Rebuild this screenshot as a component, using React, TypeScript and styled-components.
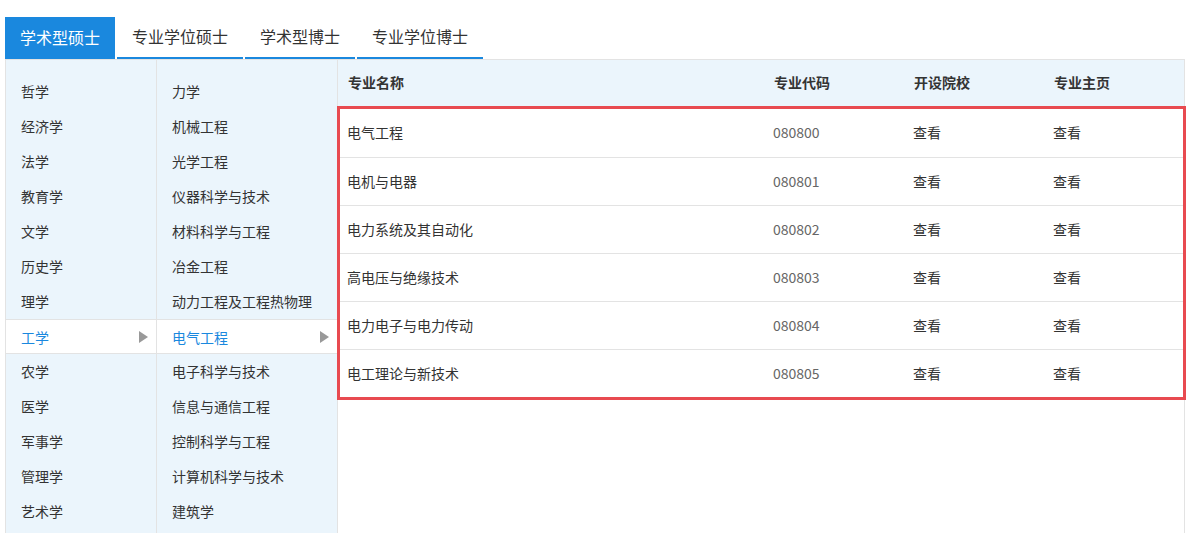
import React from "react";
import styled, { createGlobalStyle, css } from "styled-components";

const GlobalStyle = createGlobalStyle`
  body {
    margin: 0;
    background: #fff;
    font-family: "Noto Sans CJK SC", "Noto Sans", sans-serif;
    color: #333;
  }
`;

const tabs = ["学术型硕士", "专业学位硕士", "学术型博士", "专业学位博士"];
const disciplines = [
  "哲学", "经济学", "法学", "教育学", "文学", "历史学", "理学",
  "工学", "农学", "医学", "军事学", "管理学", "艺术学",
];
const subjects = [
  "力学", "机械工程", "光学工程", "仪器科学与技术", "材料科学与工程", "冶金工程",
  "动力工程及工程热物理", "电气工程", "电子科学与技术", "信息与通信工程",
  "控制科学与工程", "计算机科学与技术", "建筑学",
];
const majors = [
  { name: "电气工程", code: "080800" },
  { name: "电机与电器", code: "080801" },
  { name: "电力系统及其自动化", code: "080802" },
  { name: "高电压与绝缘技术", code: "080803" },
  { name: "电力电子与电力传动", code: "080804" },
  { name: "电工理论与新技术", code: "080805" },
];

const Page = styled.div`
  padding: 17px 19px 0 5px;
`;

const TabBar = styled.div`
  display: flex;
  gap: 2px;
  height: 42px;
`;

const Tab = styled.div<{ $active?: boolean }>`
  padding: 0 15px;
  font-size: 16px;
  line-height: 41px;
  box-sizing: border-box;
  ${({ $active }) =>
    $active
      ? css`
          background: #1a88de;
          color: #fff;
        `
      : css`
          color: #333;
          border-bottom: 2px solid #1a88de;
          line-height: 39px;
        `}
`;

const Body = styled.div`
  display: flex;
  border-top: 1px solid #e3e3e3;
  height: 474px;
`;

const Column = styled.div<{ $width: number }>`
  width: ${({ $width }) => $width}px;
  flex-shrink: 0;
  background: #ebf5fc;
  border-left: 1px solid #e3e3e3;
  padding-top: 14px;
  box-sizing: border-box;
`;

const Item = styled.div<{ $active?: boolean }>`
  height: 35px;
  display: flex;
  align-items: center;
  justify-content: space-between;
  padding: 0 8px 2px 15px;
  font-size: 14px;
  box-sizing: border-box;
  ${({ $active }) =>
    $active &&
    css`
      background: #fff;
      color: #1a88de;
      border-top: 1px solid #e3e3e3;
      border-bottom: 1px solid #e3e3e3;
      padding-bottom: 0;
    `}
`;

const Arrow = styled.span`
  width: 0;
  height: 0;
  border-top: 6px solid transparent;
  border-bottom: 6px solid transparent;
  border-left: 9px solid #999;
`;

const Table = styled.div`
  flex: 1;
  border-left: 1px solid #e3e3e3;
  border-right: 1px solid #e3e3e3;
  display: flex;
  flex-direction: column;
`;

const Row = styled.div<{ $head?: boolean }>`
  display: grid;
  grid-template-columns: 426px 140px 140px 1fr;
  align-items: center;
  padding-left: 10px;
  font-size: 14px;
  box-sizing: border-box;
  ${({ $head }) =>
    $head
      ? css`
          height: 46px;
          padding-bottom: 2px;
          background: #ebf5fc;
          font-weight: bold;
          color: #333;
        `
      : css`
          height: 48px;
          padding-left: 7px;
          padding-bottom: 2px;
          & + & {
            border-top: 1px solid #e3e3e3;
          }
        `}
`;

const Highlight = styled.div`
  border: 3px solid #e84a50;
  margin: 0 -2px 0 -1px;
`;

const Code = styled.span`
  color: #666;
`;

export default function App() {
  return (
    <Page>
      <GlobalStyle />
      <TabBar>
        {tabs.map((t, i) => (
          <Tab key={t} $active={i === 0}>
            {t}
          </Tab>
        ))}
      </TabBar>
      <Body>
        <Column $width={151}>
          {disciplines.map((d) => (
            <Item key={d} $active={d === "工学"}>
              {d}
              {d === "工学" && <Arrow />}
            </Item>
          ))}
        </Column>
        <Column $width={181}>
          {subjects.map((s) => (
            <Item key={s} $active={s === "电气工程"}>
              {s}
              {s === "电气工程" && <Arrow />}
            </Item>
          ))}
        </Column>
        <Table>
          <Row $head>
            <span>专业名称</span>
            <span>专业代码</span>
            <span>开设院校</span>
            <span>专业主页</span>
          </Row>
          <Highlight>
            {majors.map((m) => (
              <Row key={m.code}>
                <span>{m.name}</span>
                <Code>{m.code}</Code>
                <span>查看</span>
                <span>查看</span>
              </Row>
            ))}
          </Highlight>
        </Table>
      </Body>
    </Page>
  );
}
